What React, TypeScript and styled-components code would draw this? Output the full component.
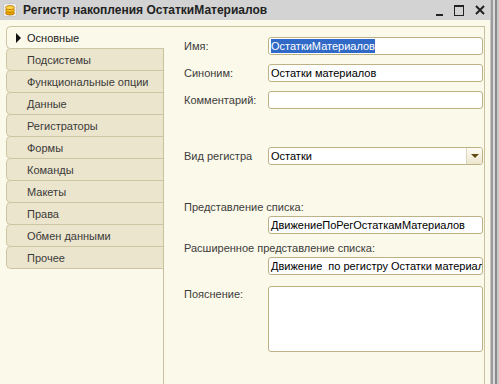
import React from "react";
import styled, { createGlobalStyle } from "styled-components";

const GlobalStyle = createGlobalStyle`
  html, body {
    margin: 0;
    padding: 0;
    background: #fbf9ea;
  }
  body {
    font-family: "Liberation Sans", Arial, sans-serif;
    font-size: 11px;
    color: #333;
  }
`;

const tabs = [
  "Подсистемы",
  "Функциональные опции",
  "Данные",
  "Регистраторы",
  "Формы",
  "Команды",
  "Макеты",
  "Права",
  "Обмен данными",
  "Прочее",
];

const Screen = styled.div`
  display: flex;
  width: 499px;
  height: 384px;
  overflow: hidden;
`;

const Frame = styled.div`
  flex: 1;
  display: flex;
  flex-direction: column;
  min-width: 0;
`;

const RightEdge = styled.div`
  width: 9px;
  flex-shrink: 0;
  background: linear-gradient(
    to right,
    #c4c4c4 0px,
    #c4c4c4 1px,
    #9c9c9c 1px,
    #9c9c9c 3px,
    #dadada 3px,
    #dadada 5px,
    #8a8a8a 5px,
    #8a8a8a 7px,
    #c8c8c8 7px
  );
`;

const TitleBar = styled.div`
  height: 20px;
  flex-shrink: 0;
  display: flex;
  align-items: center;
  padding: 0 0 0 3px;
  background: #d3d3d3;
  color: #222;
  font-weight: bold;
  font-size: 12px;
`;

const TitleText = styled.span`
  margin-left: 6px;
  flex: 1;
  white-space: nowrap;
`;

const Controls = styled.div`
  display: flex;
  align-items: center;
  margin-right: 2px;
`;

const Main = styled.div`
  flex: 1;
  display: flex;
  padding: 6px 5px 0 0;
  min-height: 0;
`;

const TabList = styled.div`
  width: 157px;
  flex-shrink: 0;
  margin-left: 6px;
  display: flex;
  flex-direction: column;
`;

const Tab = styled.div<{ $active?: boolean }>`
  height: 21px;
  flex-shrink: 0;
  display: flex;
  align-items: center;
  padding-left: ${(p) => (p.$active ? "9px" : "20px")};
  border: 1px solid #cdc4a4;
  border-right: none;
  border-radius: 5px 0 0 5px;
  margin-bottom: -1px;
  background: ${(p) => (p.$active ? "#fbf9ea" : "#ece5cd")};
  color: ${(p) => (p.$active ? "#222" : "#3a3a3a")};
  white-space: nowrap;
  position: relative;
  ${(p) =>
    p.$active &&
    `
    margin-right: -1px;
    z-index: 1;
  `}
`;

const Arrow = styled.span`
  width: 0;
  height: 0;
  border-top: 5px solid transparent;
  border-bottom: 5px solid transparent;
  border-left: 5px solid #111;
  margin-right: 6px;
`;

const Panel = styled.div`
  flex: 1;
  min-width: 0;
  border: 1px solid #c9c09c;
  border-bottom: none;
  padding: 10px 1px 0 20px;
  display: flex;
  flex-direction: column;
`;

const Row = styled.div<{ $gap: number; $top?: boolean }>`
  display: flex;
  align-items: ${(p) => (p.$top ? "flex-start" : "center")};
  margin-top: ${(p) => p.$gap}px;
`;

const Label = styled.div<{ $top?: boolean }>`
  width: 84px;
  flex-shrink: 0;
  color: #3c3c3c;
  line-height: 14px;
  white-space: nowrap;
  ${(p) => p.$top && "padding-top: 1px;"}
`;

const Caption = styled.div<{ $gap: number }>`
  margin-top: ${(p) => p.$gap}px;
  line-height: 14px;
  color: #3c3c3c;
  white-space: nowrap;
`;

const Field = styled.div<{ $h?: number }>`
  flex: 1;
  min-width: 0;
  height: ${(p) => (p.$h ? p.$h - 2 : 16)}px;
  border: 1px solid #bdb286;
  border-radius: 3px;
  background: #fff;
  display: flex;
  align-items: ${(p) => (p.$h ? "flex-start" : "center")};
  padding-left: 2px;
  color: #000;
  white-space: nowrap;
  overflow: hidden;
`;

const Selected = styled.span`
  background: #3169c6;
  color: #fff;
  line-height: 14px;
`;

const SelectValue = styled.span`
  flex: 1;
`;

const DropButton = styled.div`
  width: 15px;
  height: 16px;
  flex-shrink: 0;
  border-left: 1px solid #ddd6bc;
  background: linear-gradient(#fdfcf4, #ece6ce);
  display: flex;
  align-items: center;
  justify-content: center;
  &::after {
    content: "";
    border-left: 4px solid transparent;
    border-right: 4px solid transparent;
    border-top: 4px solid #5e4a12;
  }
`;

function RegisterIcon() {
  return (
    <svg width="14" height="14" viewBox="0 0 14 14">
      <rect x="0.5" y="0.5" width="13" height="13" rx="2" fill="#eeeeee" stroke="#c8c8c8" />
      <ellipse cx="7" cy="10" rx="4.5" ry="2" fill="#e9a400" stroke="#b86e00" strokeWidth="0.8" />
      <ellipse cx="7" cy="7.3" rx="4.5" ry="2" fill="#f6c21c" stroke="#b86e00" strokeWidth="0.8" />
      <ellipse cx="7" cy="4.6" rx="4.5" ry="2" fill="#ffd84a" stroke="#b86e00" strokeWidth="0.8" />
    </svg>
  );
}

function WindowControls() {
  return (
    <Controls>
      <svg width="60" height="14" viewBox="0 0 60 14">
        <rect x="8" y="11" width="7" height="2" fill="#222" />
        <rect x="26.5" y="2.5" width="9" height="10" fill="none" stroke="#222" />
        <rect x="26" y="2" width="10" height="2" fill="#222" />
        <path d="M48 3 L56 11 M56 3 L48 11" stroke="#222" strokeWidth="2" />
      </svg>
    </Controls>
  );
}

export default function App() {
  return (
    <Screen>
      <GlobalStyle />
      <Frame>
        <TitleBar>
          <RegisterIcon />
          <TitleText>Регистр накопления ОстаткиМатериалов</TitleText>
          <WindowControls />
        </TitleBar>
        <Main>
          <TabList>
            <Tab $active>
              <Arrow />
              Основные
            </Tab>
            {tabs.map((t) => (
              <Tab key={t}>{t}</Tab>
            ))}
          </TabList>
          <Panel>
            <Row $gap={0}>
              <Label>Имя:</Label>
              <Field>
                <Selected>ОстаткиМатериалов</Selected>
              </Field>
            </Row>
            <Row $gap={9}>
              <Label>Синоним:</Label>
              <Field>Остатки материалов</Field>
            </Row>
            <Row $gap={9}>
              <Label>Комментарий:</Label>
              <Field />
            </Row>
            <Row $gap={38}>
              <Label>Вид регистра</Label>
              <Field>
                <SelectValue>Остатки</SelectValue>
                <DropButton />
              </Field>
            </Row>
            <Caption $gap={35}>Представление списка:</Caption>
            <Row $gap={2}>
              <Label />
              <Field>ДвижениеПоРегОстаткамМатериалов</Field>
            </Row>
            <Caption $gap={7}>Расширенное представление списка:</Caption>
            <Row $gap={2}>
              <Label />
              <Field>Движение&nbsp; по регистру Остатки материалов</Field>
            </Row>
            <Row $gap={11} $top>
              <Label $top>Пояснение:</Label>
              <Field $h={66} />
            </Row>
          </Panel>
        </Main>
      </Frame>
      <RightEdge />
    </Screen>
  );
}
